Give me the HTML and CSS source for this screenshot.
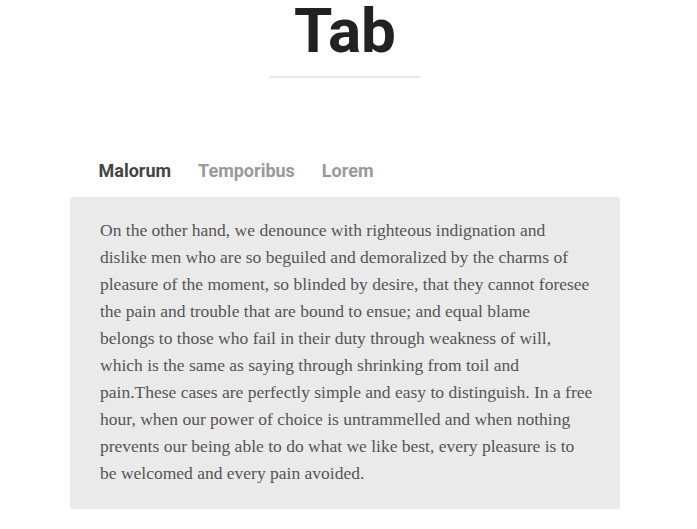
FILE: index.html
```html
<!DOCTYPE html>
<html>
<head>
<meta charset="utf-8">
<link rel="stylesheet" href="styles.css">
</head>
<body>
<div class="page">
  <header class="head">
    <h1 class="title">Tab</h1>
    <div class="rule"></div>
  </header>
  <section class="tabs">
    <nav class="tab-list">
      <span class="tab active">Malorum</span>
      <span class="tab">Temporibus</span>
      <span class="tab">Lorem</span>
    </nav>
    <div class="panel">
      <p>On the other hand, we denounce with righteous indignation and<br>dislike men who are so beguiled and demoralized by the charms of<br>pleasure of the moment, so blinded by desire, that they cannot foresee<br>the pain and trouble that are bound to ensue; and equal blame<br>belongs to those who fail in their duty through weakness of will,<br>which is the same as saying through shrinking from toil and<br>pain.These cases are perfectly simple and easy to distinguish. In a free<br>hour, when our power of choice is untrammelled and when nothing<br>prevents our being able to do what we like best, every pleasure is to<br>be welcomed and every pain avoided.</p>
    </div>
  </section>
</div>
</body>
</html>
```

FILE: styles.css
```css
html, body {
  margin: 0;
  padding: 0;
  background: #fff;
}
.page {
  width: 550px;
  margin-left: 70px;
}
.head {
  display: flex;
  flex-direction: column;
  align-items: center;
}
.title {
  margin: 0;
  font-family: Roboto, "Liberation Sans", sans-serif;
  font-weight: 700;
  font-size: 62px;
  line-height: 64px;
  color: #222;
  margin-top: -1px;
}
.rule {
  width: 150px;
  height: 2px;
  background: #e8e8e8;
  margin-top: 13px;
}
.tabs {
  margin-top: 81px;
}
.tab-list {
  display: flex;
  padding-left: 15px;
}
.tab {
  font-family: Roboto, "Liberation Sans", sans-serif;
  font-weight: 700;
  font-size: 18px;
  line-height: 24px;
  padding: 0 13.5px;
  color: #999;
}
.tab.active {
  color: #444;
}
.panel {
  margin-top: 14px;
  background: #eaeaea;
  border-radius: 3px;
  padding: 20px 30px 22px;
}
.panel p {
  margin: 0;
  font-family: "Liberation Serif", serif;
  font-size: 17.5px;
  line-height: 27px;
  color: #555;
  white-space: nowrap;
}
```
